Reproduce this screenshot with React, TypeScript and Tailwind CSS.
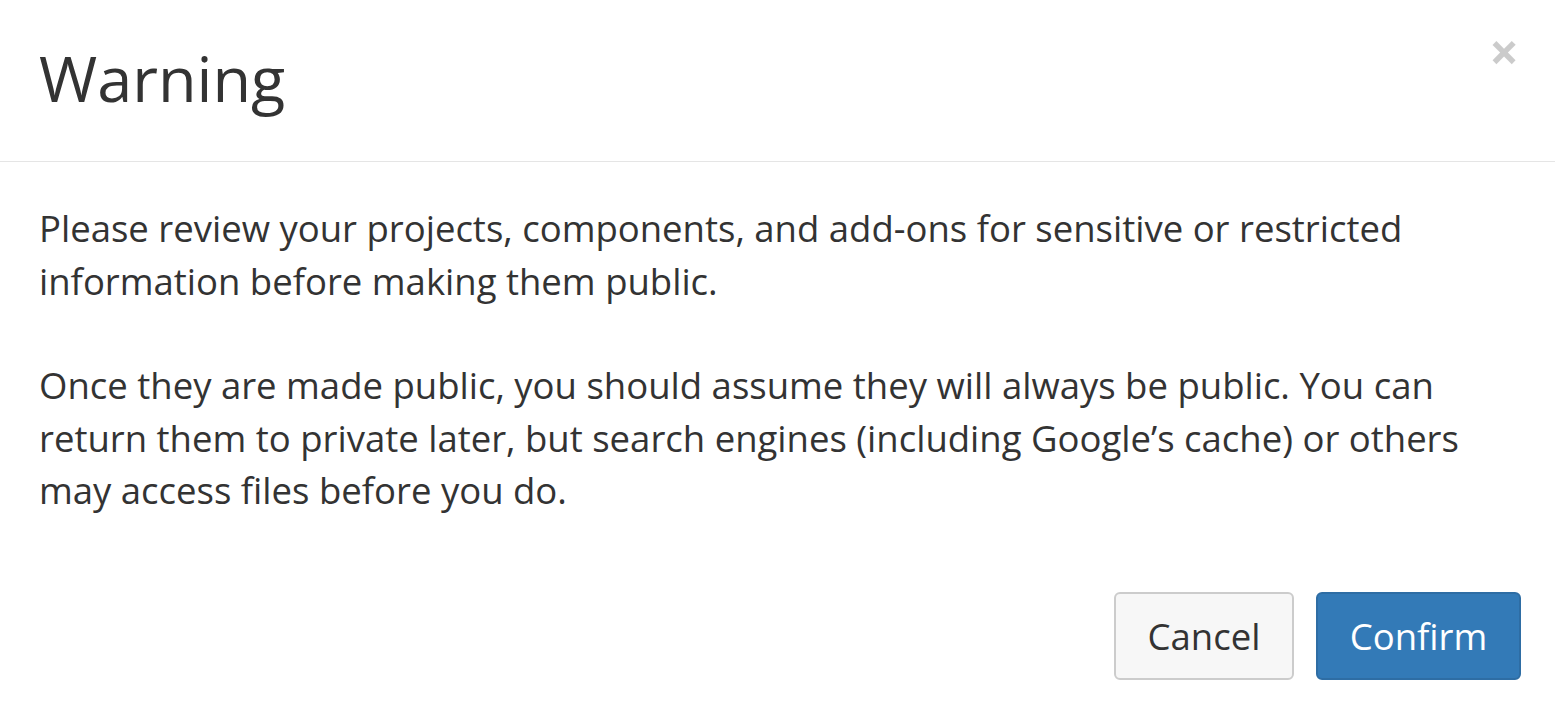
import React from 'react';

const App = () => {
  return (
    <div className="w-[1555px] h-[713px] bg-white text-[#333] font-['Open_Sans',sans-serif] flex flex-col">
      <div className="flex items-start justify-between pl-[39px] pr-[36px] pt-[43px] h-[162px] border-b border-[#e5e5e5]">
        <h3 className="text-[63px] leading-[1.1] font-normal">Warning</h3>
        <button className="text-[52px] leading-none font-bold text-black opacity-20 -mt-[18px]">×</button>
      </div>

      <div className="pl-[39px] pr-[35px] pt-[40px] text-[36.5px] leading-[52.5px]">
        <p className="mb-[52px]">
          Please review your projects, components, and add-ons for sensitive or restricted information before making them public.
        </p>
        <p>
          Once they are made public, you should assume they will always be public. You can return them to private later, but search engines (including Google’s cache) or others may access files before you do.
        </p>
      </div>

      <div className="flex justify-end gap-[22px] pr-[34px] mt-[75px]">
        <button className="w-[180px] h-[88px] pt-[2px] rounded-[6px] border-2 border-[#ccc] bg-[#f7f7f7] text-[36.5px] text-[#333]">
          Cancel
        </button>
        <button className="w-[205px] h-[88px] pt-[2px] rounded-[6px] border-2 border-[#2e6da4] bg-[#337ab7] text-[36.5px] text-white">
          Confirm
        </button>
      </div>
    </div>
  );
};

export default App;
